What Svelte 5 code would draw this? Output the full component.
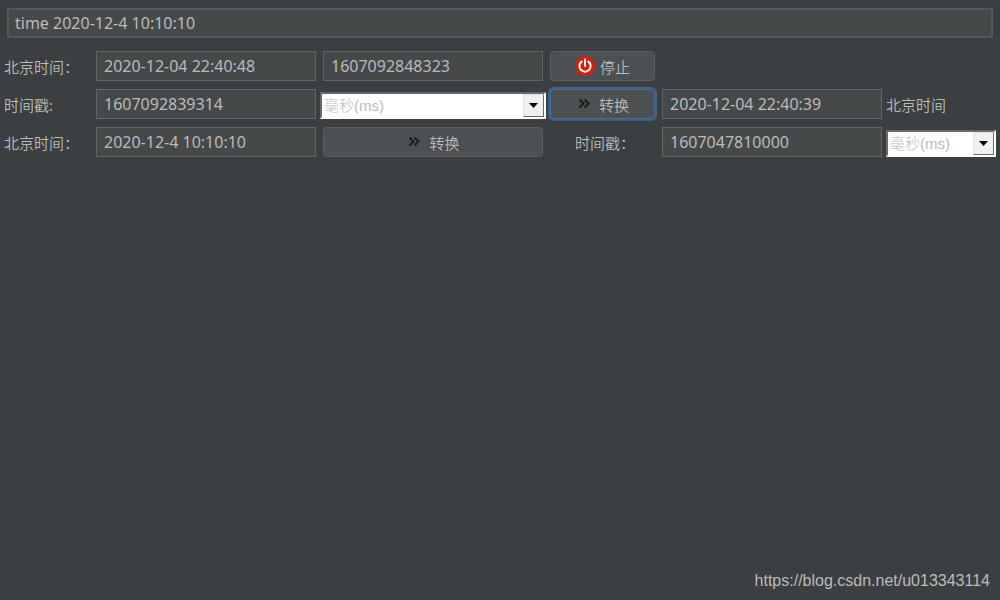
<script lang="ts">
  let command = $state('time 2020-12-4 10:10:10');
  let nowText = $state('2020-12-04 22:40:48');
  let nowStamp = $state('1607092848323');
  let stampInput = $state('1607092839314');
  let stampResult = $state('2020-12-04 22:40:39');
  let timeInput = $state('2020-12-4 10:10:10');
  let timeResult = $state('1607047810000');
  let stampUnit = $state('ms');
  let resultUnit = $state('ms');

  const units = [
    { value: 'ms', label: '毫秒(ms)' },
    { value: 's', label: '秒(s)' }
  ];
</script>

{#snippet chevrons()}
  <svg class="chevrons" width="16" height="16" viewBox="0 0 16 16" aria-hidden="true">
    <path d="M3.500 3.500l4 4-4 4M8.500 3.500l4 4-4 4" />
  </svg>
{/snippet}

{#snippet arrow()}
  <span class="arrow" aria-hidden="true">
    <svg width="9" height="5" viewBox="0 0 9 5"><path d="M0 0h9L4.500 5z" /></svg>
  </span>
{/snippet}

<main class="tool">
  <div class="command">
    <input type="text" aria-label="time" bind:value={command} />
  </div>

  <div class="grid">
    <!-- current time -->
    <label for="now-text">北京时间：</label>
    <input id="now-text" type="text" bind:value={nowText} />
    <input type="text" aria-label="时间戳" bind:value={nowStamp} />
    <button type="button">
      <svg width="20" height="20" viewBox="0 0 20 20" aria-hidden="true">
        <circle cx="10" cy="10" r="10" fill="#d81e06" />
        <path class="power" d="M6.600 5.600a5.600 5.600 0 1 0 6.800 0M10 3.500v6.500" />
      </svg>
      停止
    </button>
    <span></span>
    <span></span>

    <!-- timestamp to time -->
    <label for="stamp-input">时间戳:</label>
    <input id="stamp-input" type="text" bind:value={stampInput} />
    <div class="combo wide">
      <select aria-label="单位" bind:value={stampUnit}>
        {#each units as unit}
          <option value={unit.value}>{unit.label}</option>
        {/each}
      </select>
      {@render arrow()}
    </div>
    <button type="button" class="convert focused">{@render chevrons()}转换</button>
    <input id="stamp-result" type="text" bind:value={stampResult} />
    <label class="after" for="stamp-result">北京时间</label>

    <!-- time to timestamp -->
    <label for="time-input">北京时间：</label>
    <input id="time-input" type="text" bind:value={timeInput} />
    <button type="button" class="convert">{@render chevrons()}转换</button>
    <label class="centered" for="time-result">时间戳：</label>
    <input id="time-result" type="text" bind:value={timeResult} />
    <div class="combo">
      <select aria-label="单位" bind:value={resultUnit}>
        {#each units as unit}
          <option value={unit.value}>{unit.label}</option>
        {/each}
      </select>
      {@render arrow()}
    </div>
  </div>

  <footer>https://blog.csdn.net/u013343114</footer>
</main>

<style>
  :global(body) {
    margin: 0;
    background: #3c3f41;
  }

  .tool {
    box-sizing: border-box;
    min-height: 100vh;
    display: flex;
    flex-direction: column;
    color: #bbbbbb;
  }

  .command {
    padding: 8px 7px 0;
  }

  .grid {
    display: grid;
    grid-template-columns: 85px 1fr 1fr 105px 1fr 107px;
    grid-auto-rows: 30px;
    gap: 8px 7px;
    padding: 13px 4px 0;
  }

  input {
    box-sizing: border-box;
    width: 100%;
    min-width: 0;
    height: 30px;
    padding: 0 7px 1px;
    border: 1px solid #646464;
    border-radius: 0;
    outline: none;
    background: #45494a;
    color: #bbbbbb;
    font: 16px 'Noto Sans', 'Noto Sans CJK SC', sans-serif;
  }

  .command input {
    padding: 0 6px;
    border: 2px solid #555859;
  }

  label {
    align-self: center;
    padding-top: 1px;
    line-height: 20px;
    white-space: nowrap;
    font-family: 'Noto Sans CJK SC', sans-serif;
    font-size: 15px;
    font-weight: 350;
  }

  .centered {
    padding-left: 25px;
  }

  .after {
    margin-left: -3px;
  }

  button {
    display: flex;
    align-items: center;
    justify-content: center;
    gap: 5px;
    padding: 0;
    border: 1px solid #5e6060;
    border-radius: 4px;
    background: #4c5052;
    color: #bbbbbb;
    font: 350 15px 'Noto Sans CJK SC', sans-serif;
  }

  .convert {
    gap: 7px;
  }

  .focused {
    border-color: #466d94;
    box-shadow: 0 0 0 2px #3d6185;
  }

  .chevrons path {
    fill: none;
    stroke: #1c1c1c;
    stroke-width: 2;
  }

  .power {
    fill: none;
    stroke: #ffffff;
    stroke-width: 2;
    stroke-linecap: round;
  }

  .combo {
    position: relative;
    align-self: end;
    height: 27px;
    margin-left: -3px;
  }

  .wide {
    margin-right: -3px;
  }

  select {
    box-sizing: border-box;
    width: 100%;
    height: 100%;
    padding: 0 24px 0 2px;
    appearance: none;
    border: 2px solid;
    border-color: #696969 #ffffff #ffffff #696969;
    border-radius: 0;
    outline: none;
    background: #ffffff;
    color: #bbbbbb;
    font: 300 15px 'Liberation Sans', 'Noto Sans CJK SC', sans-serif;
  }

  .arrow {
    position: absolute;
    top: 2px;
    right: 2px;
    bottom: 2px;
    box-sizing: border-box;
    width: 21px;
    display: flex;
    align-items: center;
    justify-content: center;
    border: 1px solid;
    border-color: #e3e3e3 #696969 #696969 #e3e3e3;
    background: #f0f0f0;
    pointer-events: none;
  }

  footer {
    margin-top: auto;
    padding: 0 10px 9px;
    text-align: right;
    font: 16px/20px 'Liberation Sans', sans-serif;
  }
</style>
